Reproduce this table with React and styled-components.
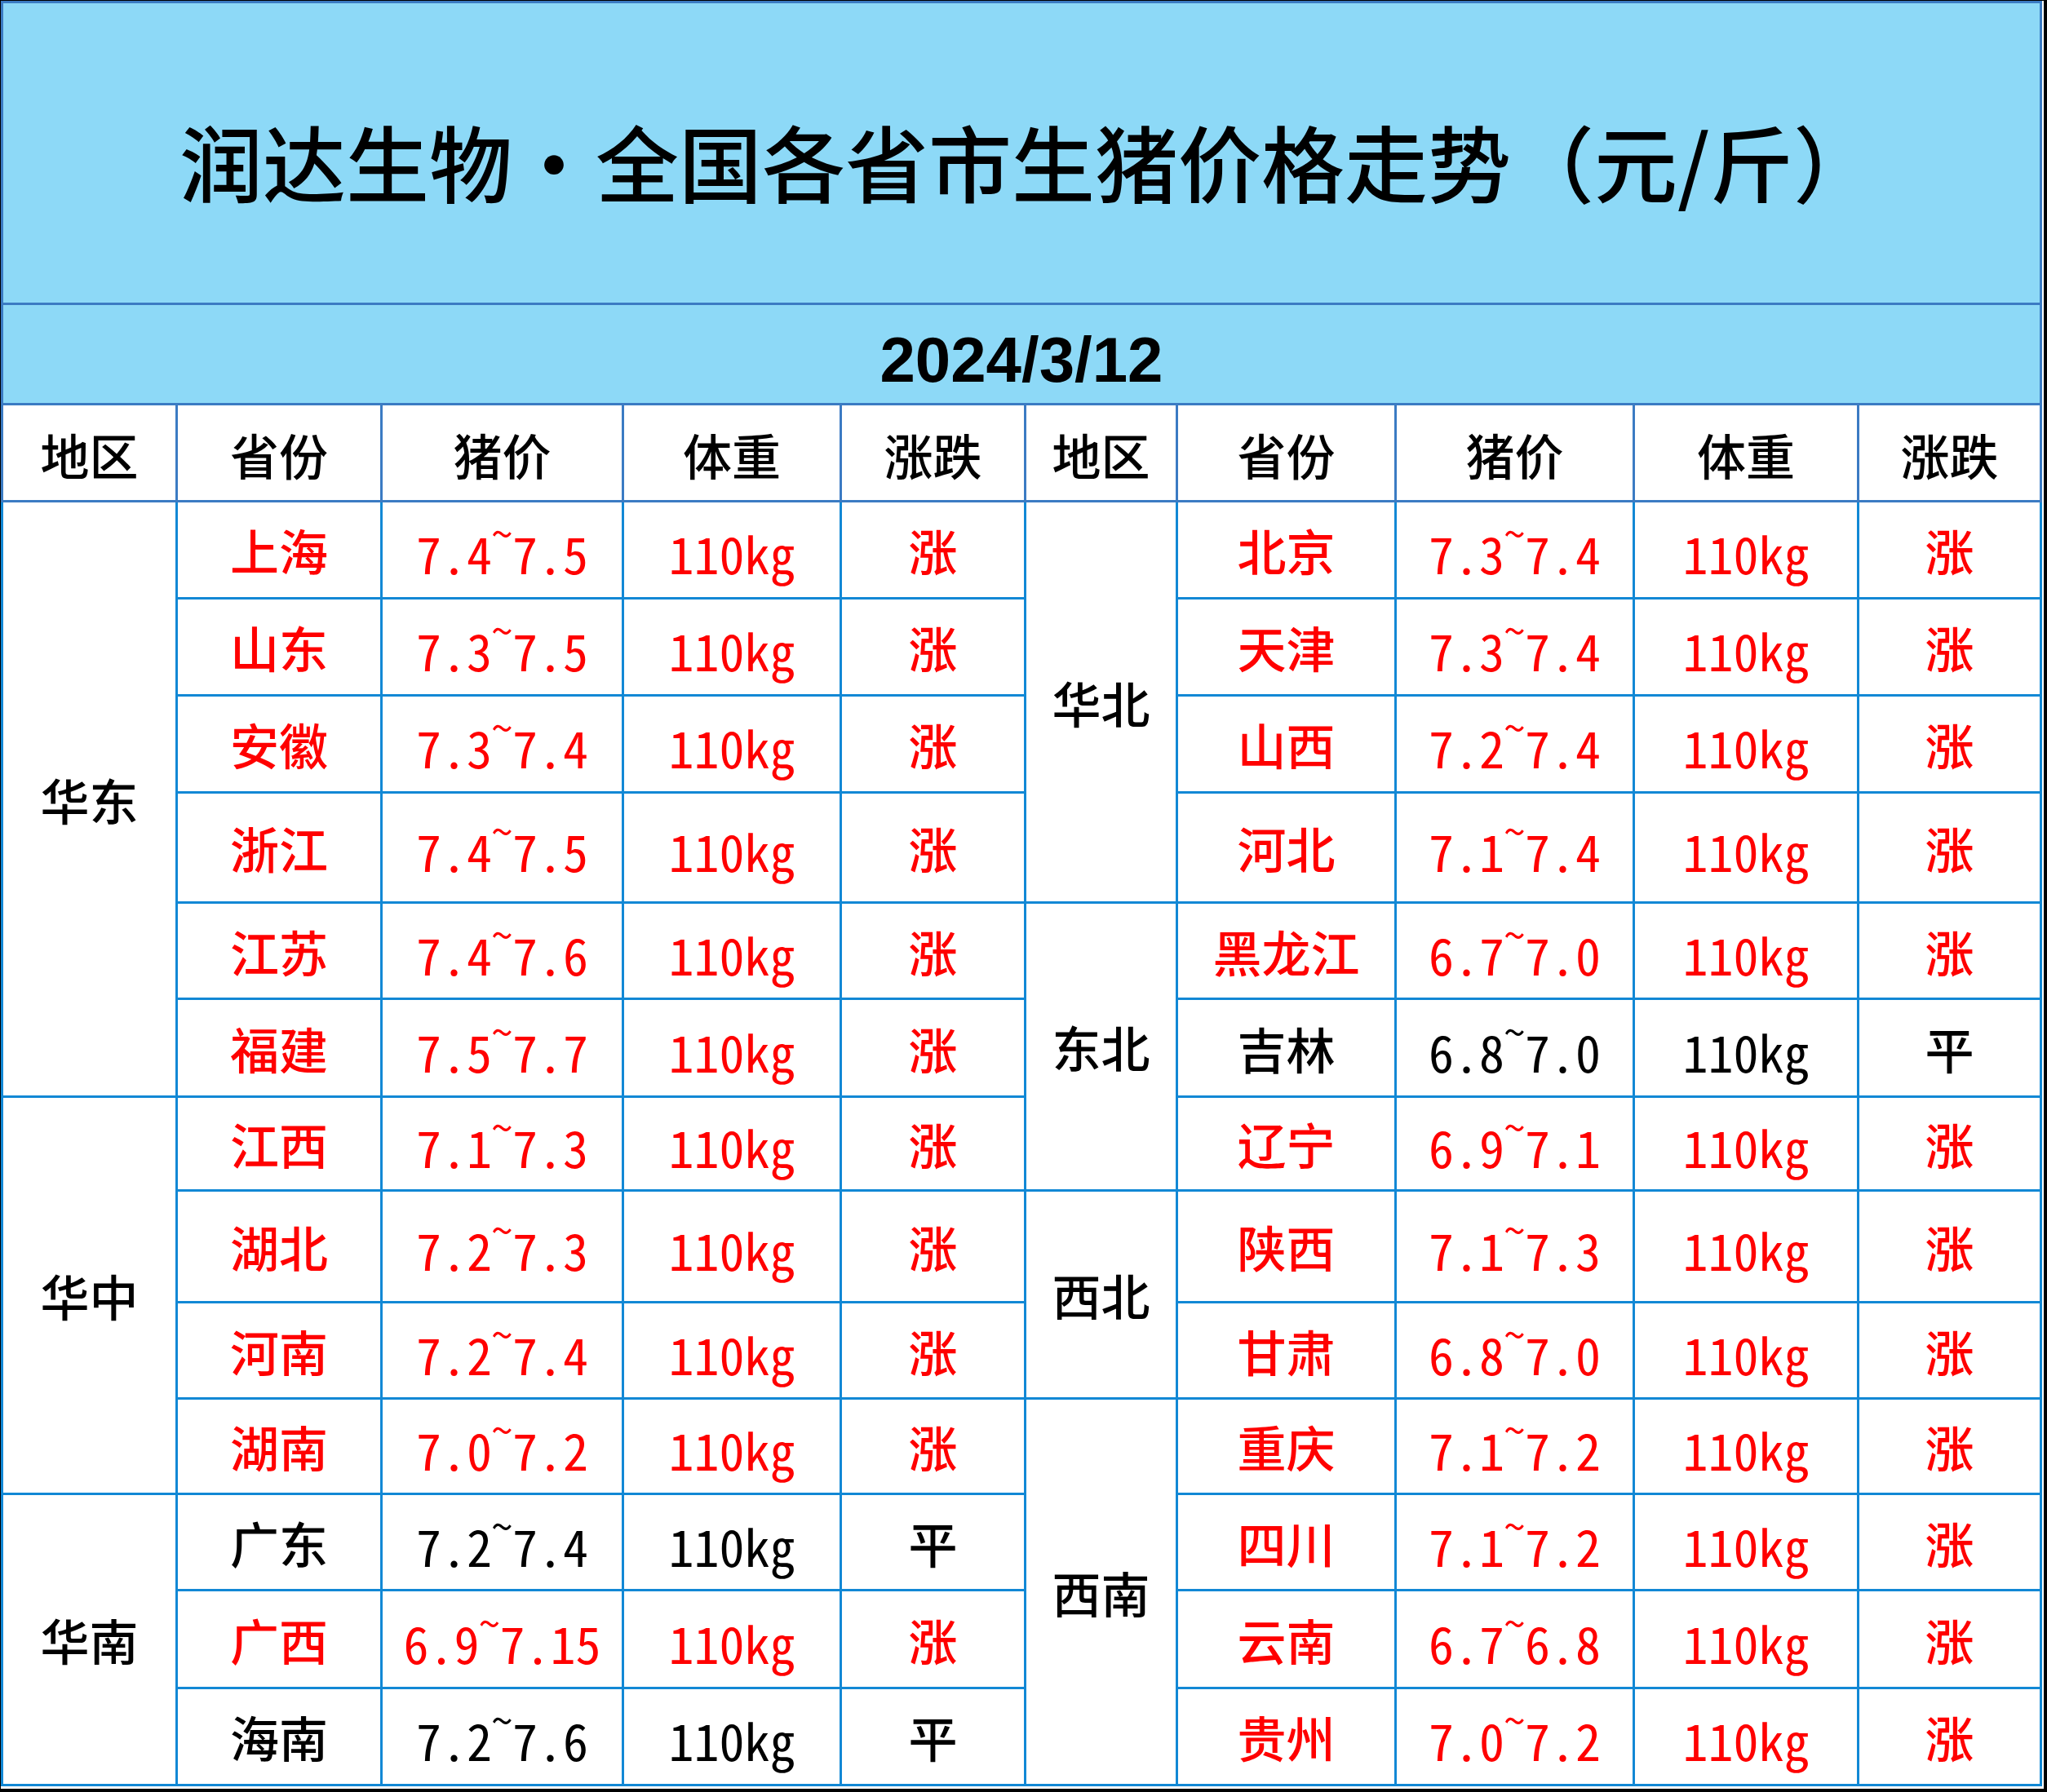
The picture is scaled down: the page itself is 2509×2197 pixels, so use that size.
import styled, { createGlobalStyle } from 'styled-components';

const GlobalStyle = createGlobalStyle`
  html, body {
    margin: 0;
    padding: 0;
    background: #ffffff;
  }
`;

const HEAD_LINE = '#3b7bc3';
const DATA_LINE = '#1288d5';
const RED = '#ff0000';

const COLUMNS = [217, 251, 296, 267, 226, 186, 268, 292, 275, 224];
const DATA_ROWS = [119, 119, 119, 135, 118, 120, 115, 137, 118, 117, 118, 120, 119];

const Frame = styled.div`
  box-sizing: border-box;
  width: 2509px;
  height: 2197px;
  border-left: 1px solid #000;
  border-top: 1px solid #000;
  border-right: 4px solid #000;
  border-bottom: 4px solid #000;
  padding-right: 2px;
  padding-bottom: 3px;
  font-family: 'Noto Sans CJK SC', 'Noto Sans', sans-serif;
`;

const Sheet = styled.div`
  display: grid;
  grid-template-columns: ${COLUMNS.map((w) => `${w}px`).join(' ')};
  grid-template-rows: 373px 123px 119px ${DATA_ROWS.map((h) => `${h}px`).join(' ')};
`;

const Cell = styled.div`
  box-sizing: border-box;
  display: flex;
  align-items: center;
  justify-content: center;
  border-right: 3px solid ${({ $head }) => ($head ? HEAD_LINE : DATA_LINE)};
  border-bottom: 3px solid ${({ $head }) => ($head ? HEAD_LINE : DATA_LINE)};
  border-left: ${({ $edge, $head }) => ($edge ? `3px solid ${$head ? HEAD_LINE : DATA_LINE}` : 'none')};
  color: ${({ $red }) => ($red ? RED : '#000')};
  font-size: 60px;
  font-weight: 500;
  line-height: 1;
  white-space: nowrap;
`;

const TitleCell = styled(Cell)`
  grid-column: 1 / -1;
  border-top: 3px solid ${HEAD_LINE};
  background: #8dd9f7;
  font-size: 102px;
  font-weight: 500;
  padding: 18px 0 0 16px;
`;

const DateCell = styled(Cell)`
  grid-column: 1 / -1;
  background: #8dd9f7;
  font-family: 'Liberation Sans', Arial, sans-serif;
  font-size: 78px;
  font-weight: 700;
  padding-top: 14px;
`;

const HeaderCell = styled(Cell)`
  padding-top: 4px;
`;

const RegionCell = styled(Cell)`
  grid-row: span ${({ $span }) => $span};
`;

const NumberCell = styled(Cell)`
  font-size: 62px;
  font-weight: 400;
  font-feature-settings: 'hwid' 1;
  padding-top: 6px;
`;

const Dot = styled.span`
  display: inline-block;
  width: 1em;
  text-align: center;
`;

const Tilde = styled.span`
  display: inline-block;
  font-size: 0.8em;
  transform: translateY(-0.5em);
`;

const left = [
  {
    region: '华东',
    rows: [
      ['上海', '7.4', '7.5', '涨'],
      ['山东', '7.3', '7.5', '涨'],
      ['安徽', '7.3', '7.4', '涨'],
      ['浙江', '7.4', '7.5', '涨'],
      ['江苏', '7.4', '7.6', '涨'],
      ['福建', '7.5', '7.7', '涨'],
    ],
  },
  {
    region: '华中',
    rows: [
      ['江西', '7.1', '7.3', '涨'],
      ['湖北', '7.2', '7.3', '涨'],
      ['河南', '7.2', '7.4', '涨'],
      ['湖南', '7.0', '7.2', '涨'],
    ],
  },
  {
    region: '华南',
    rows: [
      ['广东', '7.2', '7.4', '平'],
      ['广西', '6.9', '7.15', '涨'],
      ['海南', '7.2', '7.6', '平'],
    ],
  },
];

const right = [
  {
    region: '华北',
    rows: [
      ['北京', '7.3', '7.4', '涨'],
      ['天津', '7.3', '7.4', '涨'],
      ['山西', '7.2', '7.4', '涨'],
      ['河北', '7.1', '7.4', '涨'],
    ],
  },
  {
    region: '东北',
    rows: [
      ['黑龙江', '6.7', '7.0', '涨'],
      ['吉林', '6.8', '7.0', '平'],
      ['辽宁', '6.9', '7.1', '涨'],
    ],
  },
  {
    region: '西北',
    rows: [
      ['陕西', '7.1', '7.3', '涨'],
      ['甘肃', '6.8', '7.0', '涨'],
    ],
  },
  {
    region: '西南',
    rows: [
      ['重庆', '7.1', '7.2', '涨'],
      ['四川', '7.1', '7.2', '涨'],
      ['云南', '6.7', '6.8', '涨'],
      ['贵州', '7.0', '7.2', '涨'],
    ],
  },
];

const HEADERS = ['地区', '省份', '猪价', '体重', '涨跌'];

// flatten groups into per-row entries, marking where a region cell starts
function flatten(groups) {
  const out = [];
  groups.forEach((g) => {
    g.rows.forEach((r, i) => {
      out.push({ region: i === 0 ? g.region : null, span: g.rows.length, row: r });
    });
  });
  return out;
}

function Half({ entry, edge }) {
  const [name, low, high, trend] = entry.row;
  const red = trend === '涨';
  return (
    <>
      {entry.region && (
        <RegionCell $edge={edge} $span={entry.span}>
          {entry.region}
        </RegionCell>
      )}
      <Cell $red={red}>{name}</Cell>
      <NumberCell $red={red}>
        {low}
        <Tilde>~</Tilde>
        {high}
      </NumberCell>
      <NumberCell $red={red}>110kg</NumberCell>
      <Cell $red={red}>{trend}</Cell>
    </>
  );
}

function Row({ leftEntry, rightEntry }) {
  return (
    <>
      <Half entry={leftEntry} edge />
      <Half entry={rightEntry} />
    </>
  );
}

export default function App() {
  const leftRows = flatten(left);
  const rightRows = flatten(right);

  return (
    <>
      <GlobalStyle />
      <Frame>
        <Sheet>
          <TitleCell $head $edge>
            润达生物<Dot>·</Dot>全国各省市生猪价格走势（元/斤）
          </TitleCell>
          <DateCell $head $edge>
            2024/3/12
          </DateCell>
          {[...HEADERS, ...HEADERS].map((h, i) => (
            <HeaderCell key={i} $head $edge={i === 0}>
              {h}
            </HeaderCell>
          ))}
          {leftRows.map((entry, i) => (
            <Row key={i} leftEntry={entry} rightEntry={rightRows[i]} />
          ))}
        </Sheet>
      </Frame>
    </>
  );
}
